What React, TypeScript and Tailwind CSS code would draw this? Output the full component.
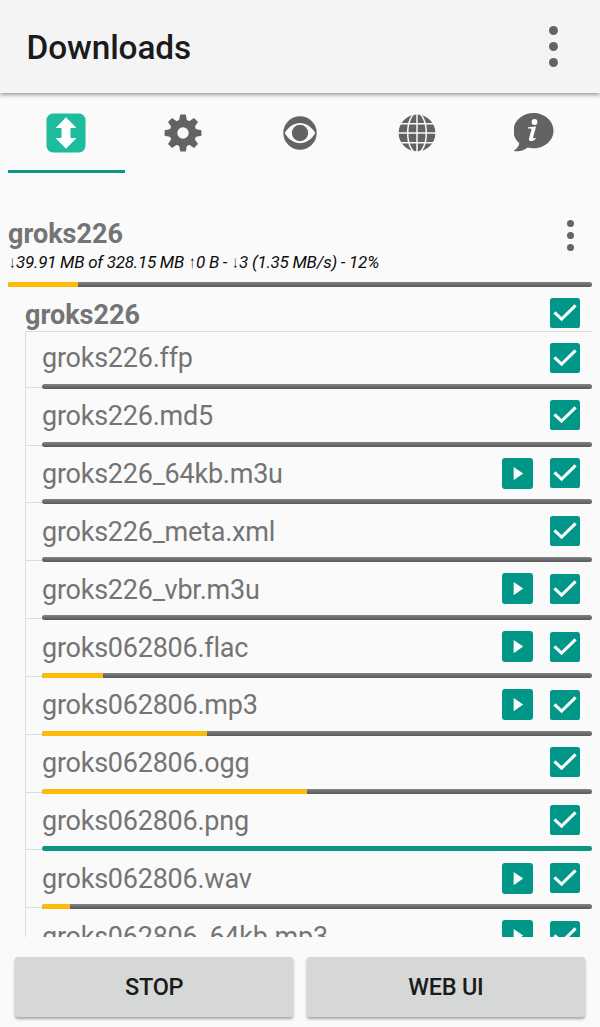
type FileItem = { name: string; progress: number; playable?: boolean };

const files: FileItem[] = [
  { name: 'groks226.ffp', progress: 0 },
  { name: 'groks226.md5', progress: 0 },
  { name: 'groks226_64kb.m3u', progress: 0, playable: true },
  { name: 'groks226_meta.xml', progress: 0 },
  { name: 'groks226_vbr.m3u', progress: 0, playable: true },
  { name: 'groks062806.flac', progress: 11, playable: true },
  { name: 'groks062806.mp3', progress: 30, playable: true },
  { name: 'groks062806.ogg', progress: 48.1 },
  { name: 'groks062806.png', progress: 100 },
  { name: 'groks062806.wav', progress: 5, playable: true },
  { name: 'groks062806_64kb.mp3', progress: 0, playable: true },
];

function Progress({ value }: { value: number }) {
  return (
    <div className="h-[5px] w-full shrink-0 overflow-hidden rounded-full bg-linear-to-b from-[#858585] via-[#6c6c6c] to-[#5a5a5a]">
      <div
        className={value === 100 ? 'h-full bg-[#0d9483]' : 'h-full bg-[#fbbc0c]'}
        style={{ width: `${value}%` }}
      />
    </div>
  );
}

function Check() {
  return (
    <svg viewBox="0 0 30 30" className="size-[30px] shrink-0">
      <rect width="30" height="30" rx="2.6" fill="#009688" />
      <path d="M4.4 14.3 11.6 21.2 25.6 7.4" fill="none" stroke="#fafafa" strokeWidth="3.1" />
    </svg>
  );
}

function Play() {
  return (
    <svg viewBox="0 0 31 31" className="size-[31px] shrink-0">
      <rect width="31" height="31" rx="3" fill="#009688" />
      <path d="M11.6 9 21.2 15.6 11.6 22.2z" fill="#fafafa" />
    </svg>
  );
}

function Row({ file }: { file: FileItem }) {
  return (
    <div className="flex h-[57.83px] shrink-0 items-end">
      <div className="mb-[1px] h-px w-4 shrink-0 bg-[#dcdcdc]" />
      <div className="flex h-full min-w-0 flex-1 flex-col">
        <div className="flex flex-1 items-center pt-[0.5px] pr-3">
          <span className="flex-1 pt-[1.5px] text-[27px] leading-8 tracking-[-0.24px] whitespace-nowrap text-[#747474]">
            {file.name}
          </span>
          <div className="flex items-center gap-[17px]">
            {file.playable && <Play />}
            <Check />
          </div>
        </div>
        <Progress value={file.progress} />
      </div>
    </div>
  );
}

function TransferIcon() {
  return (
    <svg viewBox="0 0 40 40" className="size-10">
      <rect x=".5" y=".5" width="39" height="39" rx="6.5" fill="#1cbc9c" />
      <path d="M20 4.2 30.5 15H24.5V25H30.5L20 35.8 9.5 25H15.5V15H9.5z" fill="#fff" />
    </svg>
  );
}

function GearIcon() {
  return (
    <svg viewBox="-20 -20 40 40" className="size-10" fill="#636363">
      {[0, 45, 90, 135].map((a) => (
        <path key={a} transform={`rotate(${a})`} d="M-2.8-18.4H2.8L4.2-11V11L2.8 18.4H-2.8L-4.2 11V-11z" />
      ))}
      <circle r="13.4" />
      <circle r="5.7" fill="#fafafa" />
    </svg>
  );
}

function EyeIcon() {
  return (
    <svg viewBox="-20 -20 40 40" className="size-10">
      <circle r="16.7" fill="#636363" />
      <path d="M-15.3 0C-7.5-13.5 7.5-13.5 15.3 0 7.5 13.5-7.5 13.5-15.3 0z" fill="#fafafa" />
      <circle r="8.2" fill="#636363" />
    </svg>
  );
}

function GlobeIcon() {
  return (
    <svg viewBox="-20 -20 40 40" className="size-10">
      <circle r="18.4" fill="#636363" />
      <g fill="none" stroke="#fafafa" strokeWidth="1.5">
        <path d="M0-19V19M-19 0H19M-18-9.2H18M-18 9.8H18" />
        <ellipse rx="9.3" ry="20" />
      </g>
    </svg>
  );
}

function InfoIcon() {
  return (
    <svg viewBox="0.5 0 40 40" className="size-10">
      <path d="M20 0C9 0 0 7.8 0 17.6c0 5.2 2.2 9.6 5.8 12.6C5.7 33 3.4 35.7 0 37.8c5.5 1.5 10.5-.4 14.1-3.3C16 35 18 35.3 20 35.3c11 0 20-7.8 20-17.6S31 0 20 0z" fill="#636363" />
      <circle cx="21" cy="9" r="2.9" fill="#fff" />
      <path d="M14.5 14.3 22.6 13.5 19.7 24C19.3 25.5 20.3 25.8 22 24.8L22.3 25.8C19.5 28.8 14.8 29 15.5 25.5L18 16.5C18.2 15.5 17 15.3 14.5 15.6z" fill="#fff" />
    </svg>
  );
}

const tabs = [TransferIcon, GearIcon, EyeIcon, GlobeIcon, InfoIcon];

function Arrow({ children }: { children: string }) {
  return <span className="inline-block w-2 origin-center scale-x-70 font-light">{children}</span>;
}

export default function App() {
  return (
    <div className="flex h-[1027px] w-[600px] flex-col overflow-hidden bg-[#fafafa] font-['Roboto',sans-serif]">
      <header className="z-10 flex h-[93px] shrink-0 items-center justify-between bg-[#f4f4f4] pr-[42px] pl-[26.5px] shadow-[0_2px_4px_rgba(0,0,0,0.38)]">
        <h1 className="pt-[2px] text-[33.4px] leading-10 font-medium tracking-[-0.1px] text-[#1b1b1b]">Downloads</h1>
        <button className="flex flex-col gap-[6.6px]" aria-label="Menu">
          <i className="size-[9px] rounded-full bg-[#646464]" />
          <i className="size-[9px] rounded-full bg-[#646464]" />
          <i className="size-[9px] rounded-full bg-[#646464]" />
        </button>
      </header>
      <nav className="grid h-20 shrink-0 grid-cols-5 px-2">
        {tabs.map((Icon, i) => (
          <button
            key={i}
            className={
              i === 0
                ? 'flex justify-center border-b-3 border-[#0d9483] pt-5'
                : 'flex justify-center border-b-3 border-transparent pt-5'
            }
          >
            <Icon />
          </button>
        ))}
      </nav>
      <main className="flex h-[764px] shrink-0 flex-col overflow-hidden px-2 pt-[45px]">
        <div className="flex h-[63.5px] shrink-0 justify-between">
          <div>
            <h2 className="text-[27px] leading-8 font-bold text-[#747474]">groks226</h2>
            <p className="text-[17px] leading-6 tracking-[-0.25px] whitespace-nowrap text-[#0c0c0c] italic">
              <Arrow>↓</Arrow>39.91 MB of 328.15 MB <Arrow>↑</Arrow>0 B - <Arrow>↓</Arrow>3 (1.35 MB/s) - 12%
            </p>
          </div>
          <button className="mt-[2px] mr-[18px] flex flex-col gap-[5.2px] self-start" aria-label="Torrent menu">
            <i className="size-[7px] rounded-full bg-[#646464]" />
            <i className="size-[7px] rounded-full bg-[#646464]" />
            <i className="size-[7px] rounded-full bg-[#646464]" />
          </button>
        </div>
        <Progress value={12} />
        <div className="flex h-[44.5px] shrink-0 items-start justify-between pt-[11.5px] pr-3 pl-[17px]">
          <h3 className="pt-px text-[27px] leading-8 font-bold text-[#747474]">groks226</h3>
          <Check />
        </div>
        <div className="ml-[17px] border-t border-l border-[#dcdcdc]">
          <div className="-mt-px flex flex-col">
            {files.map((file) => (
              <Row key={file.name} file={file} />
            ))}
          </div>
        </div>
      </main>
      <footer className="flex gap-[13.5px] px-[15px] pt-5">
        <button className="h-[60px] flex-1 rounded-[3px] bg-[#d6d7d7] pt-[2px] text-[23.5px] font-medium tracking-[-0.25px] text-[#1b1b1b] shadow-[0_2px_3px_rgba(0,0,0,0.35)]">
          STOP
        </button>
        <button className="h-[60px] flex-1 rounded-[3px] bg-[#d6d7d7] pt-[2px] text-[23.5px] font-medium tracking-[-0.25px] text-[#1b1b1b] shadow-[0_2px_3px_rgba(0,0,0,0.35)]">
          WEB UI
        </button>
      </footer>
    </div>
  );
}
